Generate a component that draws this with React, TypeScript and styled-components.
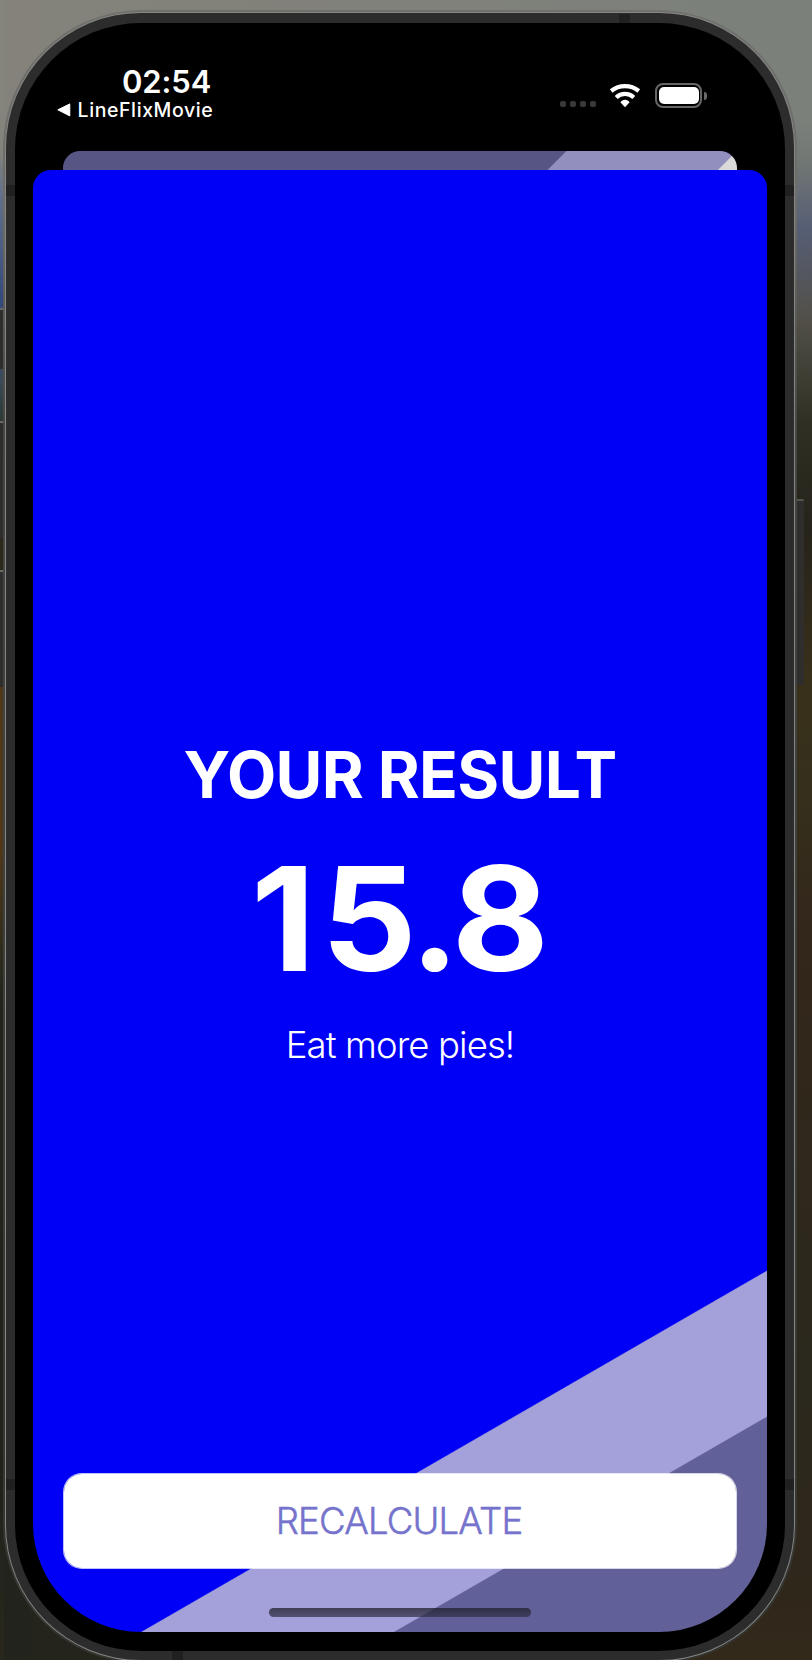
import React from "react";
import styled, { createGlobalStyle, css } from "styled-components";

const GlobalStyle = createGlobalStyle`
  * { box-sizing: border-box; }
  body {
    margin: 0;
    overflow: hidden;
    background: #2a271d;
    font-family: Inter, "Liberation Sans", sans-serif;
    -webkit-font-smoothing: antialiased;
  }
`;

/* Blurred wallpaper behind the handset */
const Backdrop = styled.main`
  position: relative;
  width: 812px;
  height: 1660px;
  padding: 10px 0 0 3px;
  overflow: hidden;
  background:
    linear-gradient(
      #84847c 0, #84847c 150px, #62708a 195px, #344a7d 300px, #3a4a58 380px,
      #2b3833 422px, #2c281b 540px, #2c281b 570px, #4f371a 690px, #50371a 850px,
      #39301b 920px, #20241d 1000px, #20231c 1500px, #29271d 1660px
    ) 0 0 / 4px 100% no-repeat,
    linear-gradient(
      to right, #84827b 0, #80817a 400px, #7b807b 812px
    ) 0 0 / 100% 120px no-repeat,
    linear-gradient(to right, #84847c 0, #84847c 60px, transparent 61px) 0 0 / 100% 170px no-repeat,
    linear-gradient(to right, #22231c 0, #26251c 120px, transparent 121px) 0 1400px / 100% 260px no-repeat,
    linear-gradient(
      #7f807a 0, #7b807b 120px, #707673 165px, #565e75 228px, #525049 318px,
      #2f3023 423px, #26231b 529px, #39301a 678px, #35301c 783px, #33261b 940px,
      #2f281c 1180px, #2b281d 1376px, #30271b 1600px, #33291b 1660px
    );
`;

const Frame = styled.div`
  position: relative;
  width: 794px;
  height: 1653px;
  padding: 2px;
  border-radius: 138px;
  background: linear-gradient(#71716c, #6c6c69 200px, #454541 420px, #34342f);
`;

const Rim = styled.div`
  height: 100%;
  padding: 1px;
  border-radius: 136px;
  background: #858585;
`;

const Metal = styled.div`
  height: 100%;
  padding: 10px 9px 9px;
  border-radius: 135px;
  background: #2c2c2c;
`;

const Bezel = styled.div`
  height: 100%;
  padding: 19px 18px;
  border-radius: 126px;
  background: #000;
`;

const Screen = styled.div`
  display: flex;
  flex-direction: column;
  height: 100%;
  overflow: hidden;
  border-radius: 0 0 108px 108px;
`;

const Antenna = styled.i<{ $x: number; $y: number; $vertical?: boolean }>`
  position: absolute;
  left: ${(p) => p.$x}px;
  top: ${(p) => p.$y}px;
  width: ${(p) => (p.$vertical ? 11 : 9)}px;
  height: ${(p) => (p.$vertical ? 9 : 11)}px;
  background: #202020;
`;

const SideKey = styled.i<{ $side: "left" | "right"; $top: number; $height: number }>`
  position: absolute;
  top: ${(p) => p.$top}px;
  height: ${(p) => p.$height}px;
  border-top: 2px solid #6a6a67;
  background: #2f2e2d;
  ${(p) =>
    p.$side === "left"
      ? css`left: 0; width: 4px;`
      : css`left: 796px; width: 8px; border-top-color: #55544d; border-radius: 0 2px 2px 0;`}
`;

const StatusBar = styled.header`
  display: flex;
  justify-content: space-between;
  height: 109px;
  padding: 0 60px 0 24px;
`;

const ClockColumn = styled.div`
  width: 160px;
  padding-top: 24px;
`;

const Clock = styled.div`
  padding-left: 65px;
  font-size: 31px;
  font-weight: 600;
  line-height: 32px;
  letter-spacing: -0.1px;
  color: #fff;
`;

const BackLink = styled.div`
  display: flex;
  align-items: center;
  gap: 7px;
  height: 24px;
  margin-left: -0.5px;
  font-size: 19.5px;
  font-weight: 500;
  line-height: 24px;
  letter-spacing: 0.6px;
  color: #fff;
  white-space: nowrap;

  svg { flex: none; }
`;

const Indicators = styled.div`
  display: flex;
  align-items: flex-start;
  padding-top: 41px;

  svg { display: block; }
`;

const Dots = styled.div`
  display: flex;
  gap: 4px;
  margin: 18px 13px 0 0;

  i {
    width: 6px;
    height: 6px;
    border-radius: 2px;
    background: #383838;
  }
`;

const Battery = styled.div`
  display: flex;
  align-items: center;
  gap: 2px;
  margin-left: 14px;
`;

const BatteryShell = styled.div`
  width: 47px;
  height: 25px;
  padding: 2px 1.5px;
  border: 2px solid #666;
  border-radius: 8px;

  i {
    display: block;
    height: 100%;
    border-radius: 5px;
    background: #fff;
  }
`;

const BatteryCap = styled.i`
  width: 3px;
  height: 8px;
  border-radius: 0 3px 3px 0;
  background: #6a6a6a;
`;

const PreviousSheet = styled.div`
  flex: none;
  height: 19px;
  margin: 0 30px;
  border-radius: 17px 17px 0 0;
  background: linear-gradient(135deg, #575584 355.5px, #928fbf 356.5px, #928fbf 476px, #dadadb 477px);
`;

const Sheet = styled.section`
  display: flex;
  flex: 1;
  flex-direction: column;
  align-items: center;
  padding: 0 30px;
  border-radius: 18px 18px 0 0;
  background: linear-gradient(
    150deg, #0000f6 1319.6px, #a3a0da 1320.8px, #a3a0da 1446px, #626098 1447.2px
  );
  color: #fff;
`;

const Result = styled.div`
  display: flex;
  flex: 1;
  flex-direction: column;
  align-items: center;
  padding-top: 565px;
  white-space: nowrap;
`;

const Title = styled.h1`
  margin: 0;
  font-size: 64px;
  font-weight: 700;
  line-height: 80px;
  letter-spacing: -0.65px;
`;

const Score = styled.div`
  margin-top: 16px;
  padding-right: 3px;
  font-size: 144.5px;
  font-weight: 700;
  line-height: 176px;
  letter-spacing: -3.6px;
  transform: scaleX(1.034);
`;

const LeadDigit = styled.span`
  letter-spacing: 5.6px;
`;

const Advice = styled.p`
  margin: 15px 0 0;
  font-size: 36.5px;
  font-weight: 300;
  line-height: 46px;
  letter-spacing: -0.9px;
`;

const RecalculateButton = styled.button`
  width: 100%;
  height: 96px;
  flex: none;
  padding: 0 2px 0 0;
  border: 1px solid rgba(255, 255, 255, 0.75);
  border-radius: 19px;
  background: #fff;
  background-clip: padding-box;
  font: 300 36.5px/94px Inter, "Liberation Sans", sans-serif;
  letter-spacing: -0.8px;
  -webkit-text-stroke: 0.5px #7573cb;
  color: #7573cb;
`;

const HomeIndicator = styled.div`
  flex: none;
  width: 262px;
  height: 9px;
  margin: 39px 0 15px;
  border-radius: 5px;
  background: linear-gradient(rgba(30, 30, 40, 0.75), rgba(48, 47, 70, 0.7));
`;

function WifiIcon() {
  return (
    <svg width="32" height="25" viewBox="0 0 32 25" fill="none" stroke="#fff" strokeWidth="4.2">
      <path d="M2.2 8A22 22 0 0 1 29.8 8" />
      <path d="M7.2 14.4A12.8 12.8 0 0 1 24.8 14.4" />
      <path d="M11.4 19.3A5.5 5.5 0 0 1 20.6 19.3L16 24.2Z" fill="#fff" stroke="none" />
    </svg>
  );
}

export default function App() {
  return (
    <>
      <GlobalStyle />
      <Backdrop>
        <SideKey $side="left" $top={308} $height={61} />
        <SideKey $side="left" $top={421} $height={117} />
        <SideKey $side="left" $top={570} $height={117} />
        <SideKey $side="right" $top={499} $height={186} />
        <Frame>
          <Rim>
            <Metal>
              <Bezel>
                <Screen>
                  <StatusBar>
                    <ClockColumn>
                      <Clock>02:54</Clock>
                      <BackLink>
                        <svg width="14" height="14" viewBox="0 0 14 14">
                          <path d="M0.8 6.8 12.8 0.9V12.9Z" fill="#fff" stroke="#fff" strokeLinejoin="round" />
                        </svg>
                        LineFlixMovie
                      </BackLink>
                    </ClockColumn>
                    <Indicators>
                      <Dots><i /><i /><i /><i /></Dots>
                      <WifiIcon />
                      <Battery>
                        <BatteryShell><i /></BatteryShell>
                        <BatteryCap />
                      </Battery>
                    </Indicators>
                  </StatusBar>
                  <PreviousSheet />
                  <Sheet>
                    <Result>
                      <Title>YOUR RESULT</Title>
                      <Score><LeadDigit>1</LeadDigit>5.8</Score>
                      <Advice>Eat more pies!</Advice>
                    </Result>
                    <RecalculateButton type="button">RECALCULATE</RecalculateButton>
                    <HomeIndicator />
                  </Sheet>
                </Screen>
              </Bezel>
            </Metal>
          </Rim>
          <Antenna $vertical $x={616} $y={4} />
          <Antenna $vertical $x={169} $y={1641} />
          <Antenna $x={3} $y={175} />
          <Antenna $x={782} $y={175} />
          <Antenna $x={3} $y={1469} />
          <Antenna $x={782} $y={1469} />
        </Frame>
      </Backdrop>
    </>
  );
}
